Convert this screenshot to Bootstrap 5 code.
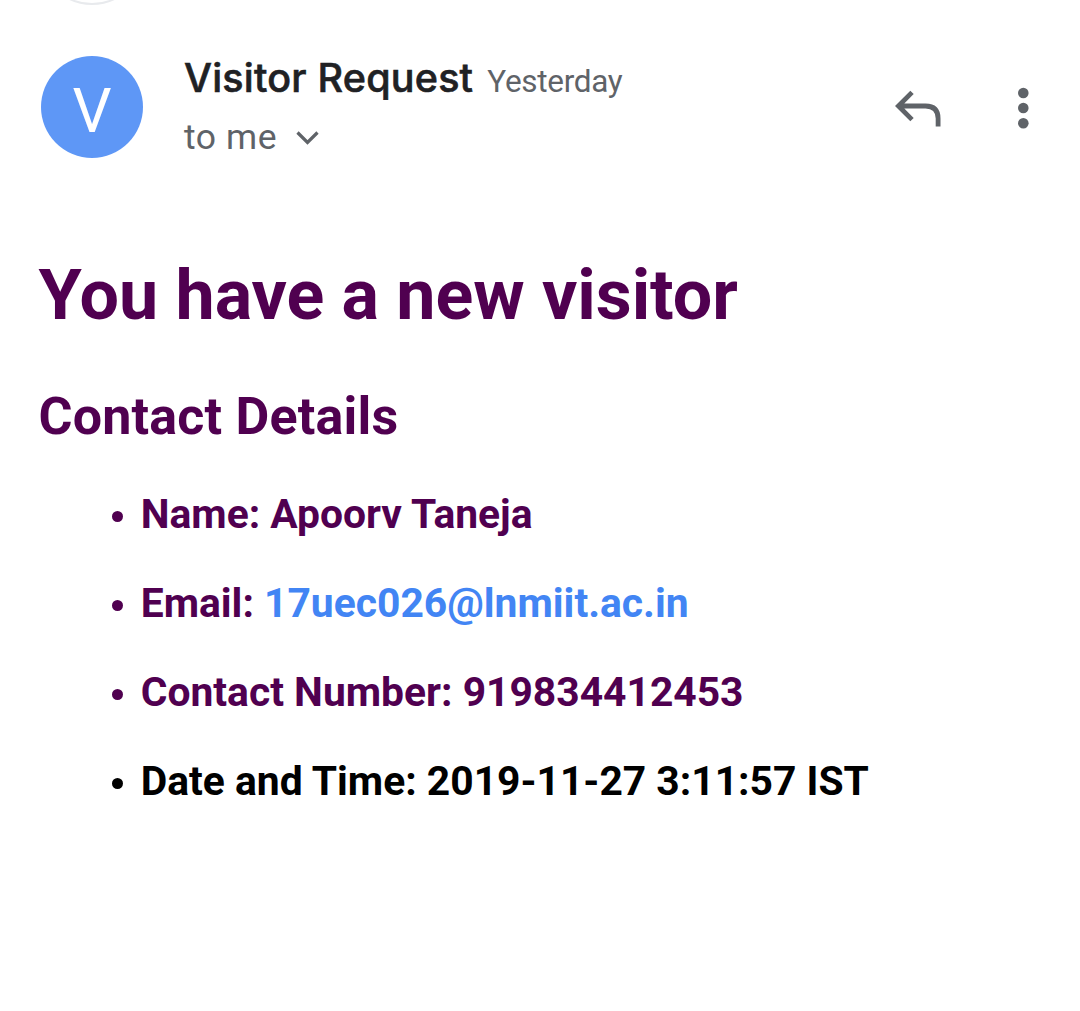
<!DOCTYPE html>
<html lang="en">
<head>
<meta charset="utf-8">
<meta name="viewport" content="width=device-width, initial-scale=1">
<title>Visitor Request</title>
<link href="https://cdn.jsdelivr.net/npm/bootstrap@5.3.0/dist/css/bootstrap.min.css" rel="stylesheet">
<style>
  body { font-family: Roboto, "Liberation Sans", sans-serif; height: 1011px; overflow: hidden; }
  .prev-msg { height: 8px; padding: 0 0 3px 40px; }
  .prev-ring { width: 104px; height: 104px; border: 2px solid #e8eaed; }
  .msg-head { padding: 48.4px 51px 0 41px; height: 246.5px; }
  .avatar { width: 102px; height: 102px; background: #5e97f6; font-size: 61.5px; line-height: 110px; }
  .who { margin-left: 41px; }
  .sender { font-family: Inter, Roboto, sans-serif; font-weight: 500; font-size: 39.5px; line-height: 44px; color: #202124; letter-spacing: .2px; -webkit-text-stroke: .6px #202124; }
  .when { font-size: 31.5px; line-height: 44px; color: #5f6368; margin-left: 14px; letter-spacing: -.3px; }
  .who-line { height: 44px; margin-top: -.9px; }
  .rcpt { font-size: 35.5px; line-height: 44px; color: #5f6368; letter-spacing: .6px; margin-top: 15.5px; }
  .acts { height: 103px; gap: 74px; }
  .mail-body { padding: 0 38.5px; color: #500050; }
  .mail-body h1 { font-size: 70px; line-height: 80px; font-weight: 700; margin-bottom: 52px; letter-spacing: -.06px; }
  .mail-body h2 { font-size: 52px; line-height: 60px; font-weight: 700; margin-bottom: 23.5px; letter-spacing: .18px; }
  .facts li { font-size: 40.8px; line-height: 89px; height: 89px; font-weight: 700; padding-left: 73.5px; }
  .facts li::before { content: ""; width: 11px; height: 11px; border-radius: 50%; background: currentColor; margin: 4px 17.7px 0 0; flex: none; }
  .facts a { color: #4285f4; }
  .facts .own { color: #000; }
</style>
</head>
<body class="bg-white">
<div class="prev-msg overflow-hidden d-flex align-items-end"><div class="prev-ring rounded-circle flex-shrink-0"></div></div>
<header class="msg-head d-flex align-items-start">
  <div class="avatar rounded-circle text-white text-center flex-shrink-0">V</div>
  <div class="who flex-grow-1">
    <div class="who-line d-flex align-items-baseline text-nowrap"><span class="sender">Visitor Request</span><span class="when">Yesterday</span></div>
    <div class="rcpt d-flex align-items-center">to me
      <svg class="ms-3" width="28" height="24" viewBox="0 0 28 24" fill="none" stroke="#5f6368" stroke-width="3.2"><path d="M4.5 7.5l10 10 10-10"/></svg>
    </div>
  </div>
  <div class="acts d-flex align-items-center">
    <svg width="50" height="44" viewBox="0 0 50 44" fill="none" stroke="#5f6368" stroke-width="4.8"><path d="M19 6.4L5.4 20 19 33.6M5.4 20H32.5q12.6 0 12.6 12.5v8"/></svg>
    <svg width="12" height="44" viewBox="0 0 12 44" fill="#5f6368"><circle cx="6.3" cy="7" r="5.3"/><circle cx="6.3" cy="22" r="5.3"/><circle cx="6.3" cy="37.2" r="5.3"/></svg>
  </div>
</header>
<main class="mail-body">
  <h1>You have a new visitor</h1>
  <h2>Contact Details</h2>
  <ul class="facts list-unstyled mb-0">
    <li class="d-flex align-items-center"><span>Name: Apoorv Taneja</span></li>
    <li class="d-flex align-items-center"><span>Email: <a class="text-decoration-none" href="mailto:17uec026@lnmiit.ac.in">17uec026@lnmiit.ac.in</a></span></li>
    <li class="d-flex align-items-center"><span>Contact Number: 919834412453</span></li>
    <li class="own d-flex align-items-center"><span>Date and Time: 2019-11-27 3:11:57 IST</span></li>
  </ul>
</main>
<script src="https://cdn.jsdelivr.net/npm/bootstrap@5.3.0/dist/js/bootstrap.bundle.min.js"></script>
</body>
</html>
